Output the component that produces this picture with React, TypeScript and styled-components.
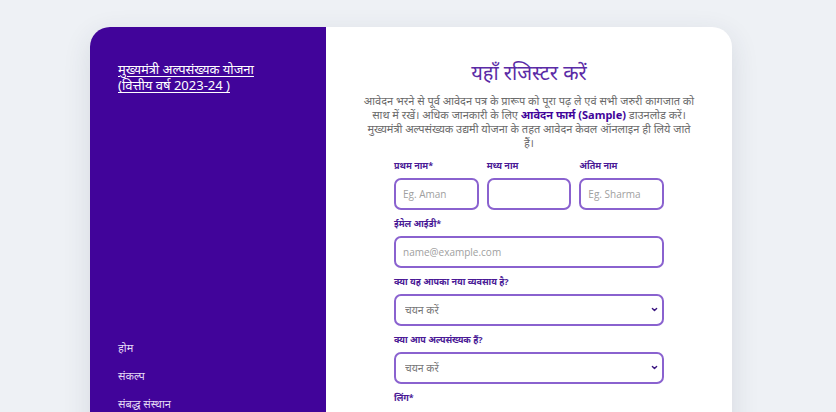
import React from 'react'
import styled, { createGlobalStyle } from 'styled-components'

const GlobalStyle = createGlobalStyle`
  html, body {
    margin: 0;
    padding: 0;
    background: #eef1f5;
    font-family: "Noto Sans", "Open Sans", sans-serif;
    overflow: hidden;
  }
`

const Page = styled.div`
  width: 836px;
  height: 412px;
  padding: 27px 0 0 90px;
  box-sizing: border-box;
  overflow: hidden;
`

const Card = styled.div`
  width: 642px;
  height: 520px;
  display: flex;
  border-radius: 20px;
  overflow: hidden;
  background: #fff;
  box-shadow: 0 8px 28px rgba(40, 50, 80, 0.12);
`

const Side = styled.aside`
  width: 236px;
  flex-shrink: 0;
  background: #41049a;
  padding: 34px 28px 0;
  box-sizing: border-box;
  display: flex;
  flex-direction: column;
`

const SideTitle = styled.a`
  color: #fff;
  font-size: 13px;
  line-height: 16px;
  text-decoration: underline;
  text-underline-offset: 2px;
`

const Nav = styled.nav`
  margin-top: 246px;
  display: flex;
  flex-direction: column;
  gap: 10px;
`

const NavItem = styled.a`
  color: #e4dbf5;
  font-size: 11px;
  line-height: 18px;
`

const Main = styled.main`
  flex: 1;
  padding: 32px 0 0;
  display: flex;
  flex-direction: column;
  align-items: center;
`

const Heading = styled.h1`
  margin: 0;
  font-size: 20px;
  line-height: 28px;
  font-weight: 400;
  color: #5a2ba6;
`

const Intro = styled.p`
  margin: 7px 0 0;
  width: 335px;
  text-align: center;
  font-size: 11px;
  line-height: 14px;
  color: #6b6b6b;

  b {
    color: #41049a;
    font-weight: 700;
  }
`

const Form = styled.form`
  width: 270px;
  margin-top: 10px;
  display: flex;
  flex-direction: column;
`

const Row = styled.div`
  display: grid;
  grid-template-columns: repeat(3, 1fr);
  gap: 8px;
`

const Field = styled.div`
  display: flex;
  flex-direction: column;
  margin-bottom: 8px;
  position: relative;
`

const Label = styled.label`
  font-size: 9px;
  line-height: 12px;
  font-weight: 700;
  color: #4a1a96;
  margin-bottom: 6px;
`

const Input = styled.input`
  height: 32px;
  box-sizing: border-box;
  border: 2px solid #8a62cf;
  border-radius: 7px;
  padding: 0 7px;
  font-family: "Open Sans", "Noto Sans", sans-serif;
  font-size: 10px;
  background: #fff;
  outline: none;
  width: 100%;

  &::placeholder {
    color: #a0a0a0;
  }
`

const Select = styled.select`
  height: 32px;
  box-sizing: border-box;
  border: 2px solid #8a62cf;
  border-radius: 7px;
  padding: 0 9px;
  font-family: "Noto Sans", sans-serif;
  font-size: 10.5px;
  color: #777;
  background: #fff;
  appearance: none;
  outline: none;
  width: 100%;
`

const Chevron = styled.svg`
  position: absolute;
  right: 6px;
  bottom: 13px;
  width: 7px;
  height: 7px;
  pointer-events: none;
`

const SelectField: React.FC<{ label: string }> = ({ label }) => (
  <Field>
    <Label>{label}</Label>
    <Select defaultValue="">
      <option value="">चयन करें</option>
    </Select>
    <Chevron viewBox="0 0 10 10">
      <path d="M2 3.5 L5 6.5 L8 3.5" fill="none" stroke="#3a1580" strokeWidth="2" strokeLinecap="round" strokeLinejoin="round" />
    </Chevron>
  </Field>
)

export default function App() {
  return (
    <Page>
      <GlobalStyle />
      <Card>
        <Side>
          <SideTitle>मुख्यमंत्री अल्पसंख्यक योजना<br />(वित्तीय वर्ष 2023-24 )</SideTitle>
          <Nav>
            <NavItem>होम</NavItem>
            <NavItem>संकल्प</NavItem>
            <NavItem>संबद्ध संस्थान</NavItem>
          </Nav>
        </Side>
        <Main>
          <Heading>यहाँ रजिस्टर करें</Heading>
          <Intro>
            आवेदन भरने से पूर्व आवेदन पत्र के प्रारूप को पूरा पढ़ ले एवं सभी जरुरी कागजात को साथ में रखें। अधिक जानकारी के लिए <b>आवेदन फार्म (Sample)</b> डाउनलोड करें। मुख्यमंत्री अल्पसंख्यक उद्यमी योजना के तहत आवेदन केवल ऑनलाइन ही लिये जाते हैं।
          </Intro>
          <Form>
            <Row>
              <Field>
                <Label>प्रथम नाम*</Label>
                <Input placeholder="Eg. Aman" />
              </Field>
              <Field>
                <Label>मध्य नाम</Label>
                <Input />
              </Field>
              <Field>
                <Label>अंतिम नाम</Label>
                <Input placeholder="Eg. Sharma" />
              </Field>
            </Row>
            <Field>
              <Label>ईमेल आईडी*</Label>
              <Input placeholder="name@example.com" />
            </Field>
            <SelectField label="क्या यह आपका नया व्यवसाय है?" />
            <SelectField label="क्या आप अल्पसंख्यक हैं?" />
            <Field>
              <Label>लिंग*</Label>
            </Field>
          </Form>
        </Main>
      </Card>
    </Page>
  )
}
